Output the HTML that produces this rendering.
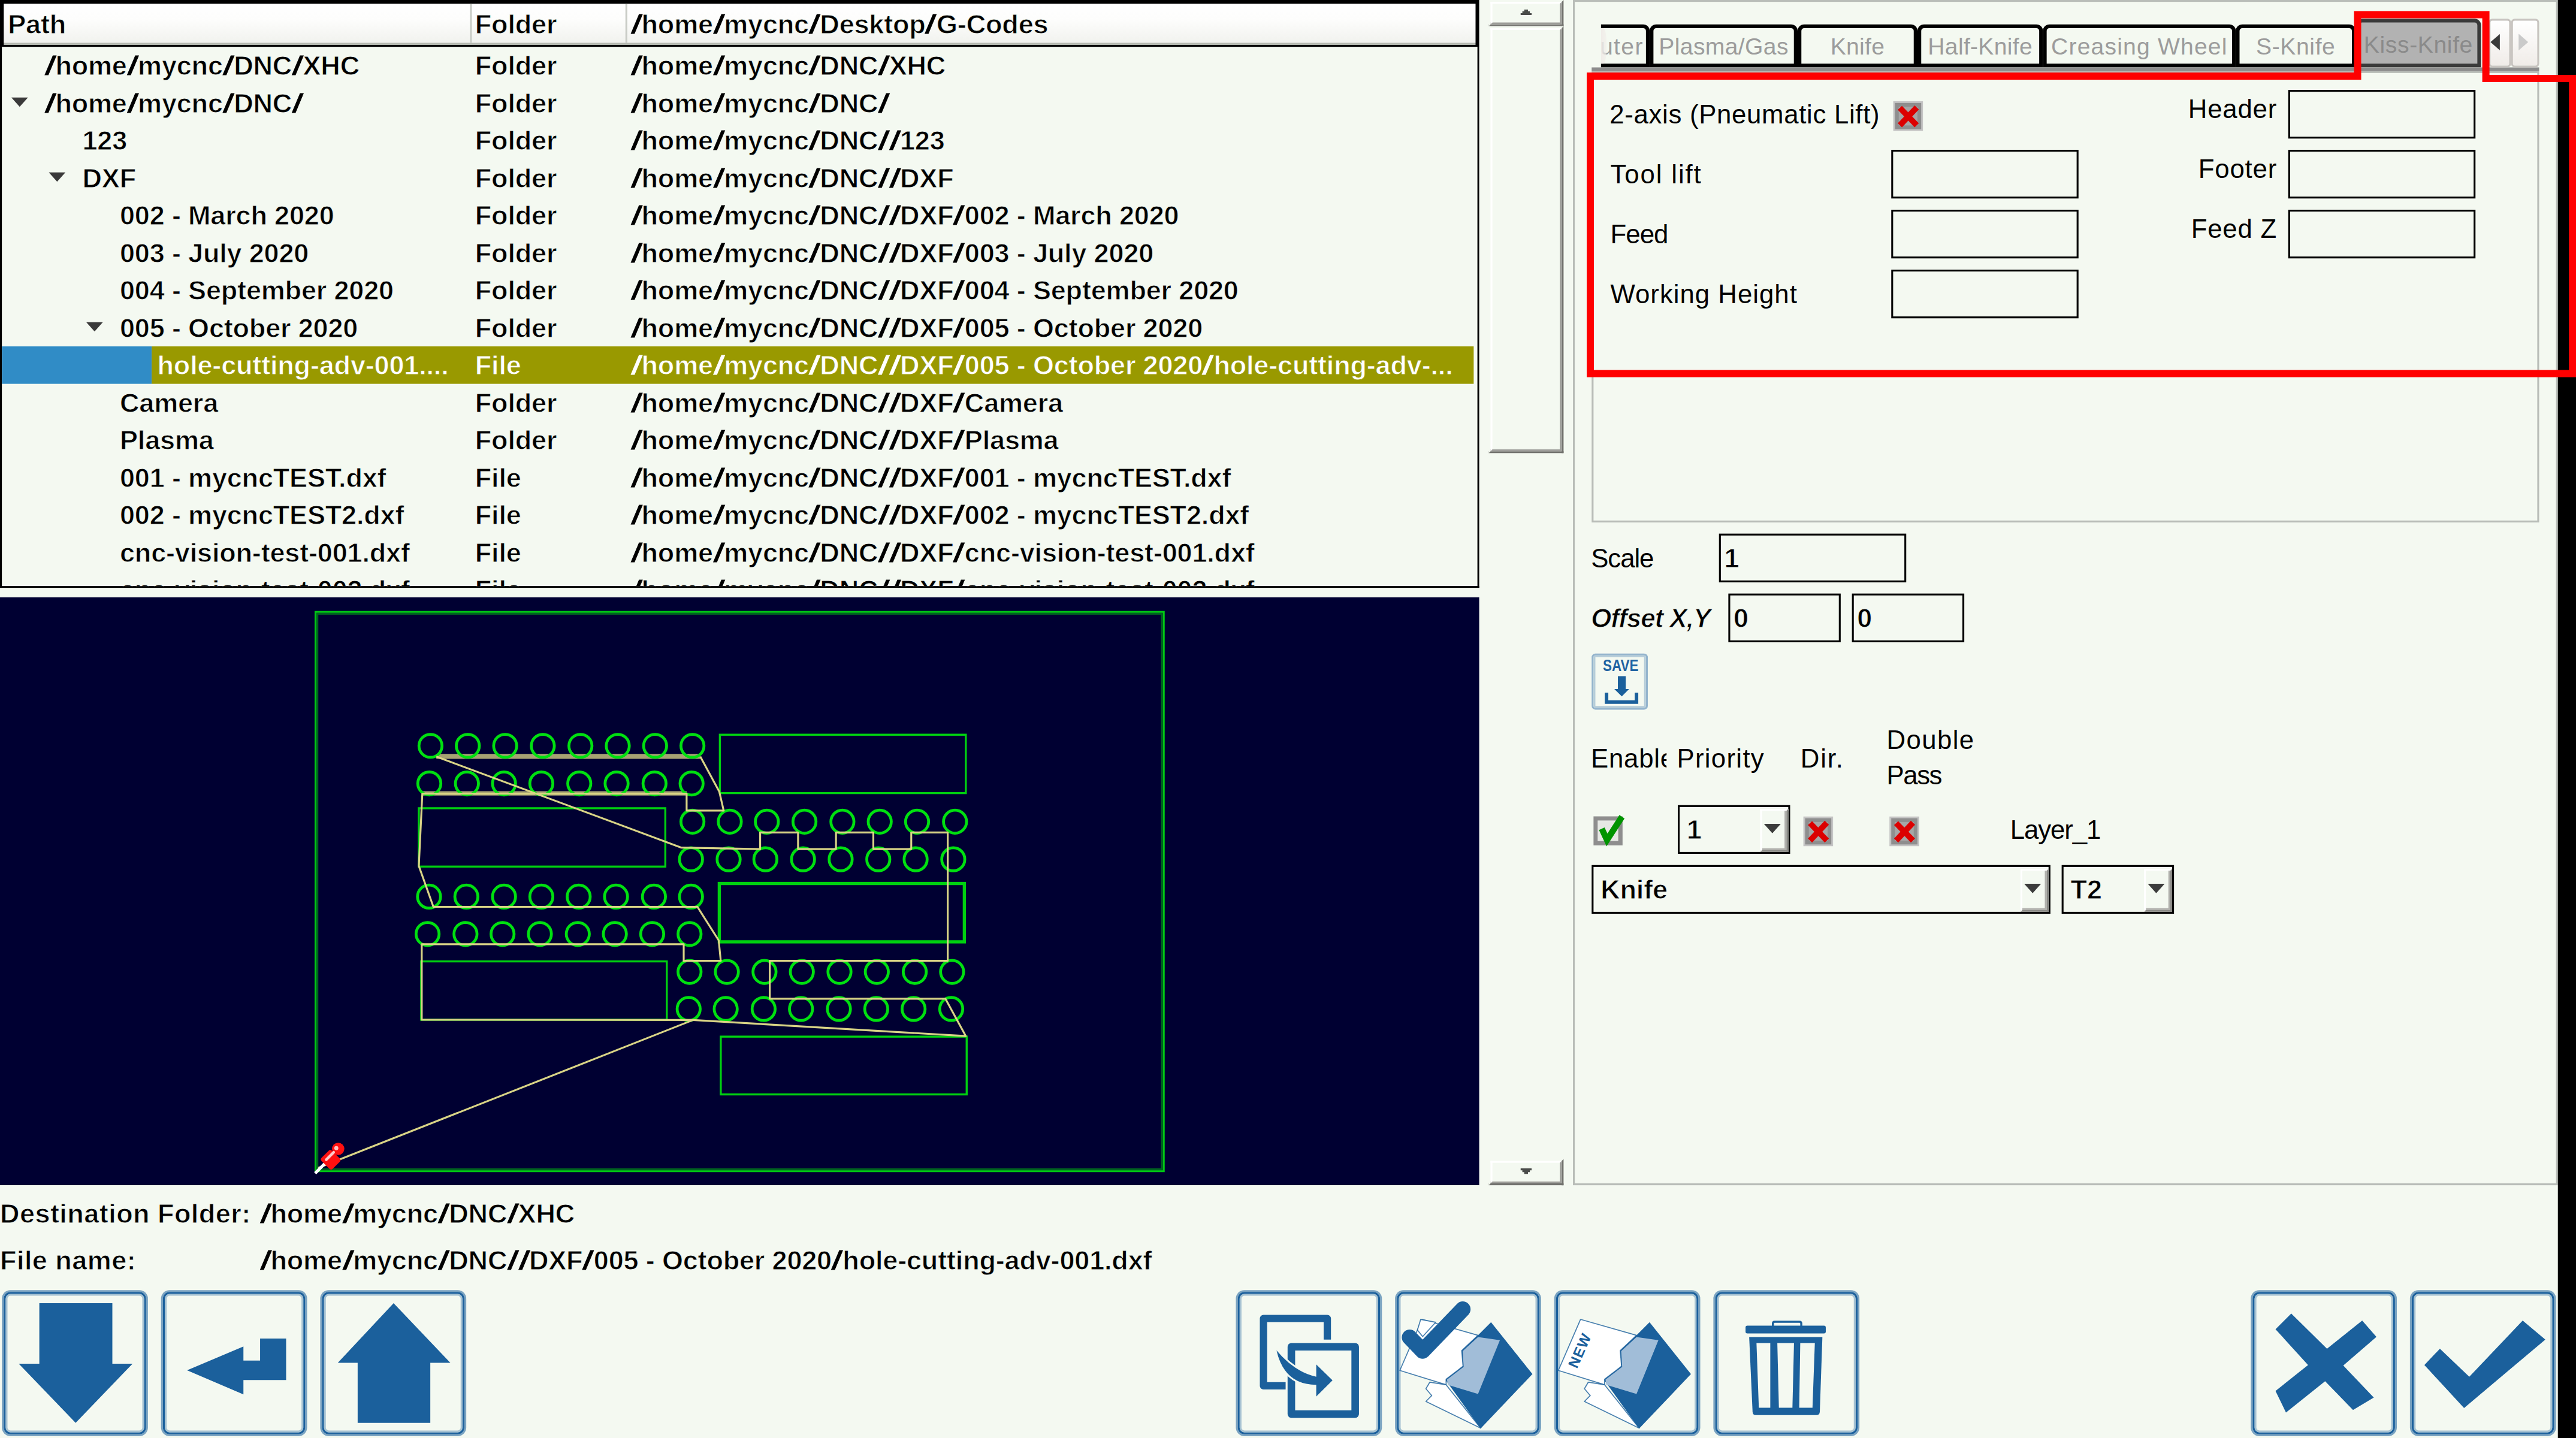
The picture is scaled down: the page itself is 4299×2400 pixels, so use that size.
<!DOCTYPE html>
<html><head><meta charset="utf-8"><title>myCNC DXF import</title>
<style>
html,body{margin:0;padding:0;overflow:hidden;}
body{width:4299px;height:2400px;overflow:hidden;background:#f4f9f1;font-family:"Liberation Sans",sans-serif;}
#clip{position:absolute;left:0;top:0;width:4299px;height:2400px;overflow:hidden;}
#app{position:absolute;left:0;top:0;width:1376px;height:768px;transform:scale(3.125);transform-origin:0 0;background:#f4f9f1;overflow:hidden;font-size:14px;color:#000;}
.a{position:absolute;}
.t{position:absolute;white-space:pre;line-height:20px;}
.b{font-weight:bold;font-size:14.4px;letter-spacing:-0.05px;-webkit-text-stroke:0.3px #f4f9f1;}
.b i{font-style:normal;font-weight:normal;-webkit-text-stroke:0.25px currentColor;display:inline-block;transform:scaleX(1.5);margin:0 0.95px;letter-spacing:0;}
svg{display:block;}
</style></head><body>
<div id="clip">
<div id="app">
<div class="a" id="tree" style="left:0;top:0;width:790px;height:314px;overflow:hidden;">
<div class="a" style="left:0px;top:0px;width:790px;height:25px;background:#000;"></div>
<div class="a" style="left:2px;top:2px;width:786px;height:21px;background:linear-gradient(#ffffff 0%,#fdfdfc 40%,#f1f2ee 100%);"></div>
<div class="a" style="left:2px;top:23px;width:786px;height:1px;background:#b4b8b0;"></div>
<div class="a" style="left:251px;top:2px;width:1px;height:21px;background:#c9ccc6;"></div>
<div class="a" style="left:334px;top:2px;width:1px;height:21px;background:#c9ccc6;"></div>
<span class="t b" style="left:4.25px;top:2.81px;">Path</span>
<span class="t b" style="left:253.7px;top:2.81px;">Folder</span>
<span class="t b" style="left:336.7px;top:2.81px;"><i>/</i>home<i>/</i>mycnc<i>/</i>Desktop<i>/</i>G-Codes</span>
<div class="a" style="left:0px;top:25px;width:1px;height:289px;background:#000;"></div>
<div class="a" style="left:789px;top:25px;width:1px;height:289px;background:#000;"></div>
<div class="a" style="left:0px;top:313px;width:790px;height:1px;background:#000;"></div>
<div class="a" style="left:1px;top:25px;width:788px;height:288px;overflow:hidden;">
<span class="t b" style="left:22.7px;top:-0.09px;"><i>/</i>home<i>/</i>mycnc<i>/</i>DNC<i>/</i>XHC</span>
<span class="t b" style="left:252.7px;top:-0.09px;">Folder</span>
<span class="t b" style="left:335.7px;top:-0.09px;"><i>/</i>home<i>/</i>mycnc<i>/</i>DNC<i>/</i>XHC</span>
<svg class="a" style="left:5px;top:27px" width="9" height="5" viewBox="0 0 9 5"><path d="M0 0H9L4.5 5Z" fill="#3a3a3a"/></svg>
<span class="t b" style="left:22.7px;top:19.91px;"><i>/</i>home<i>/</i>mycnc<i>/</i>DNC<i>/</i></span>
<span class="t b" style="left:252.7px;top:19.91px;">Folder</span>
<span class="t b" style="left:335.7px;top:19.91px;"><i>/</i>home<i>/</i>mycnc<i>/</i>DNC<i>/</i></span>
<span class="t b" style="left:43px;top:39.91px;">123</span>
<span class="t b" style="left:252.7px;top:39.91px;">Folder</span>
<span class="t b" style="left:335.7px;top:39.91px;"><i>/</i>home<i>/</i>mycnc<i>/</i>DNC<i>/</i><i>/</i>123</span>
<svg class="a" style="left:25px;top:67px" width="9" height="5" viewBox="0 0 9 5"><path d="M0 0H9L4.5 5Z" fill="#3a3a3a"/></svg>
<span class="t b" style="left:43px;top:59.91px;">DXF</span>
<span class="t b" style="left:252.7px;top:59.91px;">Folder</span>
<span class="t b" style="left:335.7px;top:59.91px;"><i>/</i>home<i>/</i>mycnc<i>/</i>DNC<i>/</i><i>/</i>DXF</span>
<span class="t b" style="left:63px;top:79.91px;">002 - March 2020</span>
<span class="t b" style="left:252.7px;top:79.91px;">Folder</span>
<span class="t b" style="left:335.7px;top:79.91px;"><i>/</i>home<i>/</i>mycnc<i>/</i>DNC<i>/</i><i>/</i>DXF<i>/</i>002 - March 2020</span>
<span class="t b" style="left:63px;top:99.91px;">003 - July 2020</span>
<span class="t b" style="left:252.7px;top:99.91px;">Folder</span>
<span class="t b" style="left:335.7px;top:99.91px;"><i>/</i>home<i>/</i>mycnc<i>/</i>DNC<i>/</i><i>/</i>DXF<i>/</i>003 - July 2020</span>
<span class="t b" style="left:63px;top:119.91px;">004 - September 2020</span>
<span class="t b" style="left:252.7px;top:119.91px;">Folder</span>
<span class="t b" style="left:335.7px;top:119.91px;"><i>/</i>home<i>/</i>mycnc<i>/</i>DNC<i>/</i><i>/</i>DXF<i>/</i>004 - September 2020</span>
<svg class="a" style="left:45px;top:147px" width="9" height="5" viewBox="0 0 9 5"><path d="M0 0H9L4.5 5Z" fill="#3a3a3a"/></svg>
<span class="t b" style="left:63px;top:139.91px;">005 - October 2020</span>
<span class="t b" style="left:252.7px;top:139.91px;">Folder</span>
<span class="t b" style="left:335.7px;top:139.91px;"><i>/</i>home<i>/</i>mycnc<i>/</i>DNC<i>/</i><i>/</i>DXF<i>/</i>005 - October 2020</span>
<div class="a" style="left:0px;top:160px;width:80px;height:20px;background:#308cc6;"></div>
<div class="a" style="left:80px;top:160px;width:706px;height:20px;background:#999900;"></div>
<span class="t b" style="left:83px;top:159.91px;color:#fff;-webkit-text-stroke-color:#999900;">hole-cutting-adv-001....</span>
<span class="t b" style="left:252.7px;top:159.91px;color:#fff;-webkit-text-stroke-color:#999900;">File</span>
<span class="t b" style="left:335.7px;top:159.91px;color:#fff;-webkit-text-stroke-color:#999900;"><i>/</i>home<i>/</i>mycnc<i>/</i>DNC<i>/</i><i>/</i>DXF<i>/</i>005 - October 2020<i>/</i>hole-cutting-adv-...</span>
<span class="t b" style="left:63px;top:179.91px;">Camera</span>
<span class="t b" style="left:252.7px;top:179.91px;">Folder</span>
<span class="t b" style="left:335.7px;top:179.91px;"><i>/</i>home<i>/</i>mycnc<i>/</i>DNC<i>/</i><i>/</i>DXF<i>/</i>Camera</span>
<span class="t b" style="left:63px;top:199.91px;">Plasma</span>
<span class="t b" style="left:252.7px;top:199.91px;">Folder</span>
<span class="t b" style="left:335.7px;top:199.91px;"><i>/</i>home<i>/</i>mycnc<i>/</i>DNC<i>/</i><i>/</i>DXF<i>/</i>Plasma</span>
<span class="t b" style="left:63px;top:219.91px;">001 - mycncTEST.dxf</span>
<span class="t b" style="left:252.7px;top:219.91px;">File</span>
<span class="t b" style="left:335.7px;top:219.91px;"><i>/</i>home<i>/</i>mycnc<i>/</i>DNC<i>/</i><i>/</i>DXF<i>/</i>001 - mycncTEST.dxf</span>
<span class="t b" style="left:63px;top:239.91px;">002 - mycncTEST2.dxf</span>
<span class="t b" style="left:252.7px;top:239.91px;">File</span>
<span class="t b" style="left:335.7px;top:239.91px;"><i>/</i>home<i>/</i>mycnc<i>/</i>DNC<i>/</i><i>/</i>DXF<i>/</i>002 - mycncTEST2.dxf</span>
<span class="t b" style="left:63px;top:259.91px;">cnc-vision-test-001.dxf</span>
<span class="t b" style="left:252.7px;top:259.91px;">File</span>
<span class="t b" style="left:335.7px;top:259.91px;"><i>/</i>home<i>/</i>mycnc<i>/</i>DNC<i>/</i><i>/</i>DXF<i>/</i>cnc-vision-test-001.dxf</span>
<span class="t b" style="left:63px;top:279.91px;">cnc-vision-test-002.dxf</span>
<span class="t b" style="left:252.7px;top:279.91px;">File</span>
<span class="t b" style="left:335.7px;top:279.91px;"><i>/</i>home<i>/</i>mycnc<i>/</i>DNC<i>/</i><i>/</i>DXF<i>/</i>cnc-vision-test-002.dxf</span>
</div>
</div>
<svg class="a" style="left:0;top:319px" width="790" height="314" viewBox="0 319 790 314">
<rect x="0" y="319" width="790" height="314" fill="#000032"/>
<rect x="168.5" y="326.8" width="453" height="298.7" fill="none" stroke="#00c814" stroke-width="1"/>
<rect x="169.5" y="327.8" width="451" height="296.7" fill="none" stroke="#006420" stroke-width="1"/>
<g transform="translate(211.2,377.6) scale(0.155794)">
<rect x="1112" y="95" width="843" height="200" fill="none" stroke="#00d010" stroke-width="7"/>
<rect x="80" y="347" width="845" height="200" fill="none" stroke="#00d010" stroke-width="7"/>
<rect x="1110" y="605" width="840" height="200" fill="none" stroke="#00d010" stroke-width="11"/>
<rect x="88" y="872" width="842" height="200" fill="none" stroke="#00d010" stroke-width="7"/>
<rect x="1115" y="1130" width="843" height="198" fill="none" stroke="#00d010" stroke-width="7"/>
<path d="M140 169 L1045 169" stroke="#a6a272" stroke-width="17" fill="none"/>
<path d="M92 296 L998 296" stroke="#a6a272" stroke-width="15" fill="none"/>
<circle cx="120" cy="133" r="39.5" fill="none" stroke="#00e010" stroke-width="9.8"/>
<circle cx="248" cy="133" r="39.5" fill="none" stroke="#00e010" stroke-width="9.8"/>
<circle cx="376" cy="133" r="39.5" fill="none" stroke="#00e010" stroke-width="9.8"/>
<circle cx="505" cy="133" r="39.5" fill="none" stroke="#00e010" stroke-width="9.8"/>
<circle cx="634" cy="133" r="39.5" fill="none" stroke="#00e010" stroke-width="9.8"/>
<circle cx="762" cy="133" r="39.5" fill="none" stroke="#00e010" stroke-width="9.8"/>
<circle cx="890" cy="133" r="39.5" fill="none" stroke="#00e010" stroke-width="9.8"/>
<circle cx="1018" cy="133" r="39.5" fill="none" stroke="#00e010" stroke-width="9.8"/>
<circle cx="116" cy="262" r="39.5" fill="none" stroke="#00e010" stroke-width="9.8"/>
<circle cx="245" cy="262" r="39.5" fill="none" stroke="#00e010" stroke-width="9.8"/>
<circle cx="372" cy="262" r="39.5" fill="none" stroke="#00e010" stroke-width="9.8"/>
<circle cx="500" cy="262" r="39.5" fill="none" stroke="#00e010" stroke-width="9.8"/>
<circle cx="630" cy="262" r="39.5" fill="none" stroke="#00e010" stroke-width="9.8"/>
<circle cx="758" cy="262" r="39.5" fill="none" stroke="#00e010" stroke-width="9.8"/>
<circle cx="888" cy="262" r="39.5" fill="none" stroke="#00e010" stroke-width="9.8"/>
<circle cx="1015" cy="262" r="39.5" fill="none" stroke="#00e010" stroke-width="9.8"/>
<circle cx="1018" cy="393" r="39.5" fill="none" stroke="#00e010" stroke-width="9.8"/>
<circle cx="1146" cy="393" r="39.5" fill="none" stroke="#00e010" stroke-width="9.8"/>
<circle cx="1273" cy="393" r="39.5" fill="none" stroke="#00e010" stroke-width="9.8"/>
<circle cx="1402" cy="393" r="39.5" fill="none" stroke="#00e010" stroke-width="9.8"/>
<circle cx="1532" cy="393" r="39.5" fill="none" stroke="#00e010" stroke-width="9.8"/>
<circle cx="1660" cy="393" r="39.5" fill="none" stroke="#00e010" stroke-width="9.8"/>
<circle cx="1788" cy="393" r="39.5" fill="none" stroke="#00e010" stroke-width="9.8"/>
<circle cx="1918" cy="393" r="39.5" fill="none" stroke="#00e010" stroke-width="9.8"/>
<circle cx="1013" cy="522" r="39.5" fill="none" stroke="#00e010" stroke-width="9.8"/>
<circle cx="1142" cy="522" r="39.5" fill="none" stroke="#00e010" stroke-width="9.8"/>
<circle cx="1268" cy="522" r="39.5" fill="none" stroke="#00e010" stroke-width="9.8"/>
<circle cx="1397" cy="522" r="39.5" fill="none" stroke="#00e010" stroke-width="9.8"/>
<circle cx="1526" cy="522" r="39.5" fill="none" stroke="#00e010" stroke-width="9.8"/>
<circle cx="1655" cy="522" r="39.5" fill="none" stroke="#00e010" stroke-width="9.8"/>
<circle cx="1783" cy="522" r="39.5" fill="none" stroke="#00e010" stroke-width="9.8"/>
<circle cx="1912" cy="522" r="39.5" fill="none" stroke="#00e010" stroke-width="9.8"/>
<circle cx="115" cy="650" r="39.5" fill="none" stroke="#00e010" stroke-width="9.8"/>
<circle cx="243" cy="650" r="39.5" fill="none" stroke="#00e010" stroke-width="9.8"/>
<circle cx="372" cy="650" r="39.5" fill="none" stroke="#00e010" stroke-width="9.8"/>
<circle cx="500" cy="650" r="39.5" fill="none" stroke="#00e010" stroke-width="9.8"/>
<circle cx="628" cy="650" r="39.5" fill="none" stroke="#00e010" stroke-width="9.8"/>
<circle cx="756" cy="650" r="39.5" fill="none" stroke="#00e010" stroke-width="9.8"/>
<circle cx="886" cy="650" r="39.5" fill="none" stroke="#00e010" stroke-width="9.8"/>
<circle cx="1013" cy="650" r="39.5" fill="none" stroke="#00e010" stroke-width="9.8"/>
<circle cx="110" cy="778" r="39.5" fill="none" stroke="#00e010" stroke-width="9.8"/>
<circle cx="240" cy="778" r="39.5" fill="none" stroke="#00e010" stroke-width="9.8"/>
<circle cx="367" cy="778" r="39.5" fill="none" stroke="#00e010" stroke-width="9.8"/>
<circle cx="495" cy="778" r="39.5" fill="none" stroke="#00e010" stroke-width="9.8"/>
<circle cx="625" cy="778" r="39.5" fill="none" stroke="#00e010" stroke-width="9.8"/>
<circle cx="752" cy="778" r="39.5" fill="none" stroke="#00e010" stroke-width="9.8"/>
<circle cx="880" cy="778" r="39.5" fill="none" stroke="#00e010" stroke-width="9.8"/>
<circle cx="1008" cy="778" r="39.5" fill="none" stroke="#00e010" stroke-width="9.8"/>
<circle cx="1008" cy="908" r="39.5" fill="none" stroke="#00e010" stroke-width="9.8"/>
<circle cx="1136" cy="908" r="39.5" fill="none" stroke="#00e010" stroke-width="9.8"/>
<circle cx="1265" cy="908" r="39.5" fill="none" stroke="#00e010" stroke-width="9.8"/>
<circle cx="1393" cy="908" r="39.5" fill="none" stroke="#00e010" stroke-width="9.8"/>
<circle cx="1522" cy="908" r="39.5" fill="none" stroke="#00e010" stroke-width="9.8"/>
<circle cx="1650" cy="908" r="39.5" fill="none" stroke="#00e010" stroke-width="9.8"/>
<circle cx="1780" cy="908" r="39.5" fill="none" stroke="#00e010" stroke-width="9.8"/>
<circle cx="1908" cy="908" r="39.5" fill="none" stroke="#00e010" stroke-width="9.8"/>
<circle cx="1005" cy="1035" r="39.5" fill="none" stroke="#00e010" stroke-width="9.8"/>
<circle cx="1132" cy="1035" r="39.5" fill="none" stroke="#00e010" stroke-width="9.8"/>
<circle cx="1262" cy="1035" r="39.5" fill="none" stroke="#00e010" stroke-width="9.8"/>
<circle cx="1390" cy="1035" r="39.5" fill="none" stroke="#00e010" stroke-width="9.8"/>
<circle cx="1520" cy="1035" r="39.5" fill="none" stroke="#00e010" stroke-width="9.8"/>
<circle cx="1648" cy="1035" r="39.5" fill="none" stroke="#00e010" stroke-width="9.8"/>
<circle cx="1776" cy="1035" r="39.5" fill="none" stroke="#00e010" stroke-width="9.8"/>
<circle cx="1905" cy="1035" r="39.5" fill="none" stroke="#00e010" stroke-width="9.8"/>
<path d="M140 170 L980 482 L1250 487 L1250 430 L1380 430 L1380 487 L1510 487 L1510 430 L1638 430 L1638 487 L1768 487 L1768 430 L1893 430 L1893 870 L1283 870 L1283 1000 L1885 1000 L1955 1128 L1020 1073" fill="none" stroke="#d9d486" stroke-width="6.5" stroke-linejoin="round"/>
<path d="M1045 170 L1110 290 L1125 355 L998 355 L998 297 L92 297 L80 545 L130 685 L1035 685 L1108 800 L1115 870 L988 870 L988 813 L90 813 L90 1072 L1020 1073 L-265 1580" fill="none" stroke="#d9d486" stroke-width="6.5" stroke-linejoin="round"/>
</g>
<path d="M168.3 626.6 L174.5 620.4" stroke="#ffffff" stroke-width="1.6"/>
<path d="M172.6 619.2 L176.4 615.4 L180.6 619.6 L176.8 623.4Z" fill="#ff1010" stroke="#ff1010" stroke-width="2.4" stroke-linejoin="round"/>
<circle cx="180.6" cy="613.6" r="3.3" fill="#ff1010"/>
<path d="M174.2 619.4 L178.2 615.4" stroke="#ffc8c8" stroke-width="1.4" stroke-linecap="round"/>
<circle cx="179.6" cy="613.2" r="1.1" fill="#ffc0c0"/>
</svg>
<div class="a" style="left:795px;top:0px;width:40px;height:14px;box-sizing:border-box;border-style:solid;border-width:1px;border-color:#f4f9f1 #72726e #72726e #f4f9f1;"><div style="box-sizing:border-box;width:100%;height:100%;border-style:solid;border-width:1px;border-color:#ffffff #9e9e9a #9e9e9a #ffffff;background:#f4f9f1"></div></div>
<svg class="a" style="left:812px;top:5px" width="6" height="3" viewBox="0 0 6 3"><path d="M2 0h2v1h1v1h1v1H0V2h1V1h1z" fill="#4a4c4a"/></svg>
<div class="a" style="left:795px;top:14px;width:40px;height:228px;box-sizing:border-box;border-style:solid;border-width:1px;border-color:#f4f9f1 #72726e #72726e #f4f9f1;"><div style="box-sizing:border-box;width:100%;height:100%;border-style:solid;border-width:1px;border-color:#ffffff #9e9e9a #9e9e9a #ffffff;background:#f4f9f1"></div></div>
<div class="a" style="left:795px;top:619px;width:40px;height:14px;box-sizing:border-box;border-style:solid;border-width:1px;border-color:#f4f9f1 #72726e #72726e #f4f9f1;"><div style="box-sizing:border-box;width:100%;height:100%;border-style:solid;border-width:1px;border-color:#ffffff #9e9e9a #9e9e9a #ffffff;background:#f4f9f1"></div></div>
<svg class="a" style="left:812px;top:624px" width="6" height="3" viewBox="0 0 6 3"><path d="M0 0h6v1h-1v1h-1v1h-2v-1h-1v-1h-1z" fill="#4a4c4a"/></svg>
<div class="a" style="left:840px;top:0px;width:526px;height:633px;box-sizing:border-box;border:1px solid #b9bdb8;"></div>
<div class="a" style="left:850px;top:38px;width:506px;height:241px;box-sizing:border-box;border:1px solid #b9bdb8;"></div>
<div class="a" style="left:850px;top:36px;width:506px;height:2.2px;background:#8c8c8c;"></div>
<div class="a" style="left:855px;top:0;width:480px;height:36px;overflow:hidden;">
<div class="a" style="left:-20.75px;top:13px;width:46.75px;height:23px;box-sizing:border-box;border:2px solid #000;border-radius:3.5px 3.5px 0 0;background:#f4f9f1;color:#9c9c9c;text-align:center;font-size:12.5px;letter-spacing:0.45px;line-height:21.4px;white-space:nowrap;">Router</div>
<div class="a" style="left:26px;top:13px;width:79px;height:23px;box-sizing:border-box;border:2px solid #000;border-radius:3.5px 3.5px 0 0;background:#f4f9f1;color:#9c9c9c;text-align:center;font-size:12.5px;letter-spacing:0.12px;line-height:21.4px;white-space:nowrap;">Plasma/Gas</div>
<div class="a" style="left:105px;top:13px;width:64px;height:23px;box-sizing:border-box;border:2px solid #000;border-radius:3.5px 3.5px 0 0;background:#f4f9f1;color:#9c9c9c;text-align:center;font-size:12.5px;letter-spacing:0.1px;line-height:21.4px;white-space:nowrap;">Knife</div>
<div class="a" style="left:169px;top:13px;width:67px;height:23px;box-sizing:border-box;border:2px solid #000;border-radius:3.5px 3.5px 0 0;background:#f4f9f1;color:#9c9c9c;text-align:center;font-size:12.5px;letter-spacing:0.1px;line-height:21.4px;white-space:nowrap;">Half-Knife</div>
<div class="a" style="left:236px;top:13px;width:103px;height:23px;box-sizing:border-box;border:2px solid #000;border-radius:3.5px 3.5px 0 0;background:#f4f9f1;color:#9c9c9c;text-align:center;font-size:12.5px;letter-spacing:0.38px;line-height:21.4px;white-space:nowrap;">Creasing Wheel</div>
<div class="a" style="left:339px;top:13px;width:64px;height:23px;box-sizing:border-box;border:2px solid #000;border-radius:3.5px 3.5px 0 0;background:#f4f9f1;color:#9c9c9c;text-align:center;font-size:12.5px;letter-spacing:0.2px;line-height:21.4px;white-space:nowrap;">S-Knife</div>
<div class="a" style="left:403px;top:10px;width:67px;height:26px;box-sizing:border-box;border:2px solid #3a3a3a;border-radius:3.5px 3.5px 0 0;background:#b2b2b2;color:#8a8a8a;text-align:center;font-size:12.5px;letter-spacing:0.2px;line-height:25.3px;white-space:nowrap;">Kiss-Knife</div>
<div class="a" style="left:0px;top:15px;width:3.2px;height:19px;background:linear-gradient(90deg,rgba(240,236,232,0.95) 0%,rgba(240,236,232,0.55) 100%);border-radius:0 60% 60% 0;"></div>
</div>
<div class="a" style="left:1329px;top:10px;width:12px;height:26px;box-sizing:border-box;border:1px solid #c8c4c0;border-radius:2px;background:linear-gradient(#ffffff,#f0ece8);"></div>
<div class="a" style="left:1341px;top:10px;width:15px;height:26px;box-sizing:border-box;border:1px solid #c8c4c0;border-radius:2px;background:linear-gradient(#ffffff,#f0ece8);"></div>
<svg class="a" style="left:1330px;top:18px" width="5.2" height="9" viewBox="0 0 5.2 9"><path d="M5.2 0V9L0 4.5Z" fill="#3a3a3a"/></svg>
<svg class="a" style="left:1345px;top:18px" width="5.2" height="9" viewBox="0 0 5.2 9"><path d="M0 0V9L5.2 4.5Z" fill="#cacaca"/></svg>
<span class="t" style="left:859.6px;top:50.55px;letter-spacing:0.22px;">2-axis (Pneumatic Lift)</span>
<svg class="a" style="left:1011px;top:54px" width="16" height="16" viewBox="0 0 16 16"><rect x="0" y="0" width="16" height="16" fill="#c4c4c4"/><rect x="1" y="1" width="14" height="14" fill="#8e8e8e"/><rect x="3" y="3" width="10" height="10" fill="#a6a6a6"/><path d="M3.6 3.6L12.6 12.9M12.6 3.4L3.6 12.9" stroke="#dc0000" stroke-width="3.1" stroke-linecap="butt"/></svg>
<span class="t" style="left:860px;top:82.55px;letter-spacing:0.6px;">Tool lift</span>
<span class="t" style="left:860px;top:114.75px;letter-spacing:-0.3px;">Feed</span>
<span class="t" style="left:860px;top:146.75px;letter-spacing:0.32px;">Working Height</span>
<div class="a" style="left:1010px;top:80px;width:100px;height:26px;box-sizing:border-box;border:1px solid #000;"></div>
<div class="a" style="left:1010px;top:112px;width:100px;height:26px;box-sizing:border-box;border:1px solid #000;"></div>
<div class="a" style="left:1010px;top:144px;width:100px;height:26px;box-sizing:border-box;border:1px solid #000;"></div>
<span class="t" style="left:1116px;width:100px;text-align:right;top:48.25px;font-size:14px;line-height:20px;letter-spacing:0.25px;">Header</span>
<span class="t" style="left:1116px;width:100px;text-align:right;top:80.25px;font-size:14px;line-height:20px;letter-spacing:0.25px;">Footer</span>
<span class="t" style="left:1116px;width:100px;text-align:right;top:112.25px;font-size:14px;line-height:20px;letter-spacing:0.25px;">Feed Z</span>
<div class="a" style="left:1222px;top:48px;width:100px;height:26px;box-sizing:border-box;border:1px solid #000;"></div>
<div class="a" style="left:1222px;top:80px;width:100px;height:26px;box-sizing:border-box;border:1px solid #000;"></div>
<div class="a" style="left:1222px;top:112px;width:100px;height:26px;box-sizing:border-box;border:1px solid #000;"></div>
<span class="t" style="left:849.7px;top:287.75px;letter-spacing:-0.35px;">Scale</span>
<div class="a" style="left:918px;top:285px;width:100px;height:26px;box-sizing:border-box;border:1px solid #000;"></div><span class="t b" style="left:920.8px;top:288.01px;">1</span>
<span class="t b" style="left:849.7px;top:319.95px;font-size:14px;letter-spacing:-0.3px;font-style:italic;">Offset X,Y</span>
<div class="a" style="left:923px;top:317px;width:60px;height:26px;box-sizing:border-box;border:1px solid #000;"></div><span class="t b" style="left:925.8px;top:320.01px;">0</span>
<div class="a" style="left:989px;top:317px;width:60px;height:26px;box-sizing:border-box;border:1px solid #000;"></div><span class="t b" style="left:991.8px;top:320.01px;">0</span>
<div class="a" style="left:850px;top:349px;width:30px;height:30px;box-sizing:border-box;border:1px solid #94b4cd;border-radius:2px;box-shadow:inset 0 0 0 1px #b6cdd9;"></div>
<svg class="a" style="left:850px;top:349px" width="30" height="30" viewBox="0 0 30 30"><text x="6" y="9.25" font-family="Liberation Sans, sans-serif" font-weight="bold" font-size="9" textLength="19" lengthAdjust="spacingAndGlyphs" fill="#1f63a2">SAVE</text><path d="M14 12.1h4.2v6.9h1.8L16.1 22.9 12.1 19h1.9z" fill="#1b609c"/><path d="M7.95 20.9v5.05h16v-5.05" fill="none" stroke="#1b609c" stroke-width="1.9"/></svg>
<div class="a" style="left:850px;top:395px;width:40px;height:22px;overflow:hidden;"><span class="t" style="left:-0.4px;top:-0.05px;letter-spacing:0.25px;">Enable</span></div>
<span class="t" style="left:895.5px;top:394.95px;letter-spacing:0.42px;">Priority</span>
<span class="t" style="left:961.5px;top:394.95px;letter-spacing:0.6px;">Dir.</span>
<span class="t" style="left:1007.5px;top:384.85px;letter-spacing:0.45px;">Double</span>
<span class="t" style="left:1007.5px;top:403.65px;letter-spacing:-0.45px;">Pass</span>
<svg class="a" style="left:851px;top:434px;overflow:visible" width="18" height="18" viewBox="0 -2 18 18"><rect x="0" y="0" width="15.5" height="15.5" fill="#8e8e8e"/><rect x="2.2" y="2.2" width="11" height="11" fill="#e6e8e4"/><path d="M4.4 6.6L7.2 12.6L15.2 0.2" stroke="#009400" stroke-width="3.3" fill="none" stroke-linejoin="miter"/></svg>
<div class="a" style="left:896px;top:430px;width:60px;height:26px;box-sizing:border-box;border:1px solid #000;"></div><div class="a" style="left:939.5px;top:432px;width:15.5px;height:23px;box-sizing:border-box;border-style:solid;border-width:1px 1px 1px 1.5px;border-color:#fff #8a8a86 #8a8a86 #fff;background:#f4f9f1;box-shadow:inset -1px -1px 0 #b0b0ac;"></div><svg class="a" style="left:941.8px;top:440px" width="9" height="5" viewBox="0 0 9 5"><path d="M0 0H9L4.5 5Z" fill="#3c3c3c"/></svg><span class="t b" style="left:900.8px;top:433.01px;">1</span>
<svg class="a" style="left:963px;top:436px" width="16" height="16" viewBox="0 0 16 16"><rect x="0" y="0" width="16" height="16" fill="#c4c4c4"/><rect x="1" y="1" width="14" height="14" fill="#8e8e8e"/><rect x="3" y="3" width="10" height="10" fill="#a6a6a6"/><path d="M3.6 3.6L12.6 12.9M12.6 3.4L3.6 12.9" stroke="#dc0000" stroke-width="3.1" stroke-linecap="butt"/></svg>
<svg class="a" style="left:1009px;top:436px" width="16" height="16" viewBox="0 0 16 16"><rect x="0" y="0" width="16" height="16" fill="#c4c4c4"/><rect x="1" y="1" width="14" height="14" fill="#8e8e8e"/><rect x="3" y="3" width="10" height="10" fill="#a6a6a6"/><path d="M3.6 3.6L12.6 12.9M12.6 3.4L3.6 12.9" stroke="#dc0000" stroke-width="3.1" stroke-linecap="butt"/></svg>
<span class="t" style="left:1073.5px;top:432.95px;letter-spacing:-0.35px;">Layer_1</span>
<div class="a" style="left:850px;top:462px;width:245px;height:26px;box-sizing:border-box;border:1px solid #000;"></div><div class="a" style="left:1078.5px;top:464px;width:15.5px;height:23px;box-sizing:border-box;border-style:solid;border-width:1px 1px 1px 1.5px;border-color:#fff #8a8a86 #8a8a86 #fff;background:#f4f9f1;box-shadow:inset -1px -1px 0 #b0b0ac;"></div><svg class="a" style="left:1080.8px;top:472px" width="9" height="5" viewBox="0 0 9 5"><path d="M0 0H9L4.5 5Z" fill="#3c3c3c"/></svg><span class="t b" style="left:854.8px;top:465.01px;">Knife</span>
<div class="a" style="left:1101px;top:462px;width:60px;height:26px;box-sizing:border-box;border:1px solid #000;"></div><div class="a" style="left:1144.5px;top:464px;width:15.5px;height:23px;box-sizing:border-box;border-style:solid;border-width:1px 1px 1px 1.5px;border-color:#fff #8a8a86 #8a8a86 #fff;background:#f4f9f1;box-shadow:inset -1px -1px 0 #b0b0ac;"></div><svg class="a" style="left:1146.8px;top:472px" width="9" height="5" viewBox="0 0 9 5"><path d="M0 0H9L4.5 5Z" fill="#3c3c3c"/></svg><span class="t b" style="left:1105.8px;top:465.01px;">T2</span>
<span class="t b" style="left:0px;top:637.91px;letter-spacing:0.15px;">Destination Folder:</span>
<span class="t b" style="left:138.6px;top:637.91px;"><i>/</i>home<i>/</i>mycnc<i>/</i>DNC<i>/</i>XHC</span>
<span class="t b" style="left:0px;top:662.81px;letter-spacing:0.15px;">File name:</span>
<span class="t b" style="left:138.6px;top:662.81px;"><i>/</i>home<i>/</i>mycnc<i>/</i>DNC<i>/</i><i>/</i>DXF<i>/</i>005 - October 2020<i>/</i>hole-cutting-adv-001.dxf</span>
<div class="a" style="left:2.1px;top:689.9px;width:76px;height:76px;box-sizing:border-box;border:1.15px solid #1b609c;border-radius:3.6px;box-shadow:0 0 0 1px rgba(27,96,156,0.56), inset 0 0 0 1px rgba(27,96,156,0.36);"></div><svg class="a" style="left:1.1px;top:688.9px" width="78" height="78" viewBox="0 0 78 78"><path d="M20 7H59V39.3H69.8L39.4 70.9L9 39.3H20Z" fill="#1b609c"/></svg>
<div class="a" style="left:87.1px;top:689.9px;width:76px;height:76px;box-sizing:border-box;border:1.15px solid #1b609c;border-radius:3.6px;box-shadow:0 0 0 1px rgba(27,96,156,0.56), inset 0 0 0 1px rgba(27,96,156,0.36);"></div><svg class="a" style="left:86.1px;top:688.9px" width="78" height="78" viewBox="0 0 78 78"><path d="M13.9 42.8L44 30.1V37.6H52.9V25.9H66.8V48H44V55.7Z" fill="#1b609c"/></svg>
<div class="a" style="left:172.1px;top:689.9px;width:76px;height:76px;box-sizing:border-box;border:1.15px solid #1b609c;border-radius:3.6px;box-shadow:0 0 0 1px rgba(27,96,156,0.56), inset 0 0 0 1px rgba(27,96,156,0.36);"></div><svg class="a" style="left:171.1px;top:688.9px" width="78" height="78" viewBox="0 0 78 78"><path d="M39.2 7L69.5 38.8H58.8V70.9H20V38.8H9.4Z" fill="#1b609c"/></svg>
<div class="a" style="left:661.3px;top:689.9px;width:76px;height:76px;box-sizing:border-box;border:1.15px solid #1b609c;border-radius:3.6px;box-shadow:0 0 0 1px rgba(27,96,156,0.56), inset 0 0 0 1px rgba(27,96,156,0.36);"></div><svg class="a" style="left:660.3px;top:688.9px" width="78" height="78" viewBox="0 0 78 78"><g transform="scale(0.0695652) translate(-108,-105)"><path d="M810 485 V323 H320 V840 H490" fill="none" stroke="#1b609c" stroke-width="56" stroke-linejoin="round"/><rect x="534" y="540" width="490" height="517" fill="none" stroke="#1b609c" stroke-width="58" stroke-linejoin="round"/><path d="M420 568 Q480 832 725 832 L725 922 L850 798 L725 676 L725 770 Q560 735 420 568Z" fill="#f4f9f1" stroke="#f4f9f1" stroke-width="26" stroke-linejoin="round"/><path d="M420 568 Q480 832 725 832 L725 922 L850 798 L725 676 L725 770 Q560 735 420 568Z" fill="#1b609c"/></g></svg>
<div class="a" style="left:746.3px;top:689.9px;width:76px;height:76px;box-sizing:border-box;border:1.15px solid #1b609c;border-radius:3.6px;box-shadow:0 0 0 1px rgba(27,96,156,0.56), inset 0 0 0 1px rgba(27,96,156,0.36);"></div><svg class="a" style="left:745.3px;top:688.9px" width="78" height="78" viewBox="0 0 78 78"><g transform="scale(0.0695652) translate(-1328,-105)"><g transform="translate(1265,0)"><path d="M270 330 L100 722 L455 832 L455 790 L585 690 L575 570 L700 452 Z" fill="#ffffff" stroke="#1b609c" stroke-width="8" stroke-opacity="0.8" stroke-linejoin="round"/><path d="M330 812 L455 832 L720 1165 L300 960 L345 915 L300 862 Z" fill="#ffffff" stroke="#1b609c" stroke-width="8" stroke-opacity="0.8" stroke-linejoin="round"/><path d="M800 352 L1118 750 L720 1168 L455 800 L455 790 L585 690 L575 570 L700 452 Z" fill="#1b609c"/><path d="M700 466 L868 490 L700 902 L468 832 L462 792 L590 694 L582 574 Z" fill="#a1bdd8"/></g><path d="M1440 468 L1540 572 L1848 252" fill="none" stroke="#1b609c" stroke-width="120" stroke-linecap="round" stroke-linejoin="round"/><path d="M1500 412 L1525 330 L1640 352 L1540 462 Z" fill="#ffffff" stroke="#1b609c" stroke-width="8" stroke-opacity="0.8"/></g></svg>
<div class="a" style="left:831.3px;top:689.9px;width:76px;height:76px;box-sizing:border-box;border:1.15px solid #1b609c;border-radius:3.6px;box-shadow:0 0 0 1px rgba(27,96,156,0.56), inset 0 0 0 1px rgba(27,96,156,0.36);"></div><svg class="a" style="left:830.3px;top:688.9px" width="78" height="78" viewBox="0 0 78 78"><g transform="scale(0.0695652) translate(-68,-105)"><g transform="translate(0,0)"><path d="M270 330 L100 722 L455 832 L455 790 L585 690 L575 570 L700 452 Z" fill="#ffffff" stroke="#1b609c" stroke-width="8" stroke-opacity="0.8" stroke-linejoin="round"/><path d="M330 812 L455 832 L720 1165 L300 960 L345 915 L300 862 Z" fill="#ffffff" stroke="#1b609c" stroke-width="8" stroke-opacity="0.8" stroke-linejoin="round"/><path d="M800 352 L1118 750 L720 1168 L455 800 L455 790 L585 690 L575 570 L700 452 Z" fill="#1b609c"/><path d="M700 466 L868 490 L700 902 L468 832 L462 792 L590 694 L582 574 Z" fill="#a1bdd8"/></g><text transform="translate(243,712) rotate(-66)" font-family="Liberation Sans, sans-serif" font-weight="bold" font-size="112" letter-spacing="6" fill="#1b609c">NEW</text></g></svg>
<div class="a" style="left:916.2px;top:689.9px;width:76px;height:76px;box-sizing:border-box;border:1.15px solid #1b609c;border-radius:3.6px;box-shadow:0 0 0 1px rgba(27,96,156,0.56), inset 0 0 0 1px rgba(27,96,156,0.36);"></div><svg class="a" style="left:915.2px;top:688.9px" width="78" height="78" viewBox="0 0 78 78"><g transform="scale(0.0695652) translate(-1285,-105)"><rect x="1532" y="378" width="616" height="60" rx="14" fill="#1b609c"/><path d="M1742 384 V362 Q1742 348 1756 348 H1946 Q1960 348 1960 362 V384" fill="none" stroke="#1b609c" stroke-width="16"/><path d="M1560 465 H2122 L2102 1040 Q2100 1065 2076 1065 H1610 Q1588 1065 1586 1040 Z" fill="#1b609c"/><path d="M1616 512 H1722 V1008 H1634 Z M1776 512 H1904 L1892 1008 H1788 Z M1952 512 H2064 L2046 1008 H1944 Z" fill="#f4f9f1"/></g></svg>
<div class="a" style="left:1203px;top:689.9px;width:76px;height:76px;box-sizing:border-box;border:1.15px solid #1b609c;border-radius:3.6px;box-shadow:0 0 0 1px rgba(27,96,156,0.56), inset 0 0 0 1px rgba(27,96,156,0.36);"></div><svg class="a" style="left:1202px;top:688.9px" width="78" height="78" viewBox="0 0 78 78"><path d="M21.6 12.5L40.7 31.3L59.5 16.3L67.1 25L49.4 40.3L65.7 57.4L54.6 64L39.7 48.7L18.8 65.4L13.2 53.9L30.6 40L13.2 20.9Z" fill="#1b609c"/></svg>
<div class="a" style="left:1288.3px;top:689.9px;width:76px;height:76px;box-sizing:border-box;border:1.15px solid #1b609c;border-radius:3.6px;box-shadow:0 0 0 1px rgba(27,96,156,0.56), inset 0 0 0 1px rgba(27,96,156,0.36);"></div><svg class="a" style="left:1287.3px;top:688.9px" width="78" height="78" viewBox="0 0 78 78"><path d="M16 31.3L31.7 46.3L60.2 16.3L72.3 26.4L28.9 63L7.7 40Z" fill="#1b609c"/></svg>
<div class="a" style="left:1366.2px;top:0;width:10px;height:768px;background:#000;"></div>
</div>
<svg style="position:absolute;left:0;top:0" width="4299" height="2400" viewBox="0 0 4299 2400">
<path d="M2654 623.6 L2654 127 L3934.5 127 L3934.5 24.4 L4148.6 24.4 L4148.6 131 L4293.2 131 L4293.2 623.6 Z" fill="none" stroke="#ff0000" stroke-width="12" stroke-linejoin="miter"/>
</svg>
</div>
</body></html>
